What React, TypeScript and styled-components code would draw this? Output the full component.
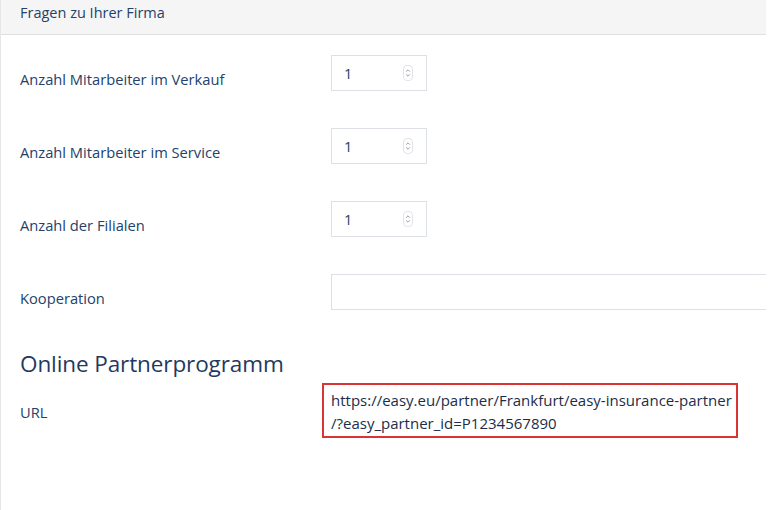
import styled, { createGlobalStyle } from "styled-components";

const GlobalStyle = createGlobalStyle`
  html, body {
    margin: 0;
    padding: 0;
    background: #ffffff;
    overflow: hidden;
  }
  body {
    font-family: "Open Sans", "Liberation Sans", sans-serif;
    color: #1f3a5e;
  }
`;

const Panel = styled.div`
  width: 766px;
  height: 510px;
  border-left: 1px solid #e6e6e6;
  box-sizing: border-box;
  overflow: hidden;
`;

const PanelHeader = styled.div`
  height: 35px;
  background: #f5f5f5;
  border-bottom: 1px solid #e0e0e0;
  box-sizing: border-box;
  display: flex;
  align-items: center;
  padding: 0 0 9px 19px;
  font-size: 14.5px;
  color: #23426b;
`;

const Form = styled.div`
  display: flex;
  flex-direction: column;
  padding: 20px 0 0 19px;
`;

const Row = styled.div`
  display: grid;
  grid-template-columns: 311px 1fr;
  align-items: center;
  height: 36px;
  margin-bottom: 37px;
`;

const Label = styled.div`
  font-size: 14.7px;
  color: #23426b;
  padding-top: 12px;
`;

const NumberBox = styled.div`
  width: 96px;
  height: 36px;
  border: 1px solid #dde1e6;
  box-sizing: border-box;
  display: flex;
  align-items: center;
  justify-content: space-between;
  padding: 0 13px 0 12px;
  font-size: 14.5px;
  color: #23426b;
`;

const Spinner = styled.span`
  width: 8px;
  height: 14px;
  border: 1px solid #e2e4e8;
  border-radius: 4px;
  display: flex;
  align-items: center;
  justify-content: center;
`;

const TextBox = styled.div`
  width: 460px;
  height: 36px;
  border: 1px solid #dde1e6;
  border-right: none;
  box-sizing: border-box;
`;

const SectionTitle = styled.h2`
  margin: 1px 0 0;
  font-size: 22.5px;
  font-weight: 400;
  color: #1f3a5e;
  letter-spacing: -0.1px;
`;

const UrlRow = styled.div`
  display: grid;
  grid-template-columns: 302px auto;
  align-items: center;
  margin-top: 4px;
`;

const UrlLabel = styled.div`
  font-size: 14.7px;
  color: #23426b;
  padding-top: 3px;
`;

const UrlBox = styled.div`
  width: 416px;
  height: 55px;
  border: 2px solid #d93535;
  box-sizing: border-box;
  padding: 4px 0 0 7px;
  font-size: 15px;
  line-height: 23px;
  color: #1b2d4a;
  white-space: nowrap;
  overflow: hidden;
`;

function SpinIcon() {
  return (
    <Spinner>
      <svg width="6" height="10" viewBox="0 0 6 10" fill="none" stroke="#8a94a3" strokeWidth="0.9">
        <path d="M1.2 3.6 L3 1.8 L4.8 3.6" />
        <path d="M1.2 6.4 L3 8.2 L4.8 6.4" />
      </svg>
    </Spinner>
  );
}

const numberFields = [
  "Anzahl Mitarbeiter im Verkauf",
  "Anzahl Mitarbeiter im Service",
  "Anzahl der Filialen",
];

export default function App() {
  return (
    <>
      <GlobalStyle />
      <Panel>
        <PanelHeader>Fragen zu Ihrer Firma</PanelHeader>
        <Form>
          {numberFields.map((label) => (
            <Row key={label}>
              <Label>{label}</Label>
              <NumberBox>
                1
                <SpinIcon />
              </NumberBox>
            </Row>
          ))}
          <Row>
            <Label>Kooperation</Label>
            <TextBox />
          </Row>
          <SectionTitle>Online Partnerprogramm</SectionTitle>
          <UrlRow>
            <UrlLabel>URL</UrlLabel>
            <UrlBox>
              https://easy.eu/partner/Frankfurt/easy-insurance-partner
              <br />
              /?easy_partner_id=P1234567890
            </UrlBox>
          </UrlRow>
        </Form>
      </Panel>
    </>
  );
}
